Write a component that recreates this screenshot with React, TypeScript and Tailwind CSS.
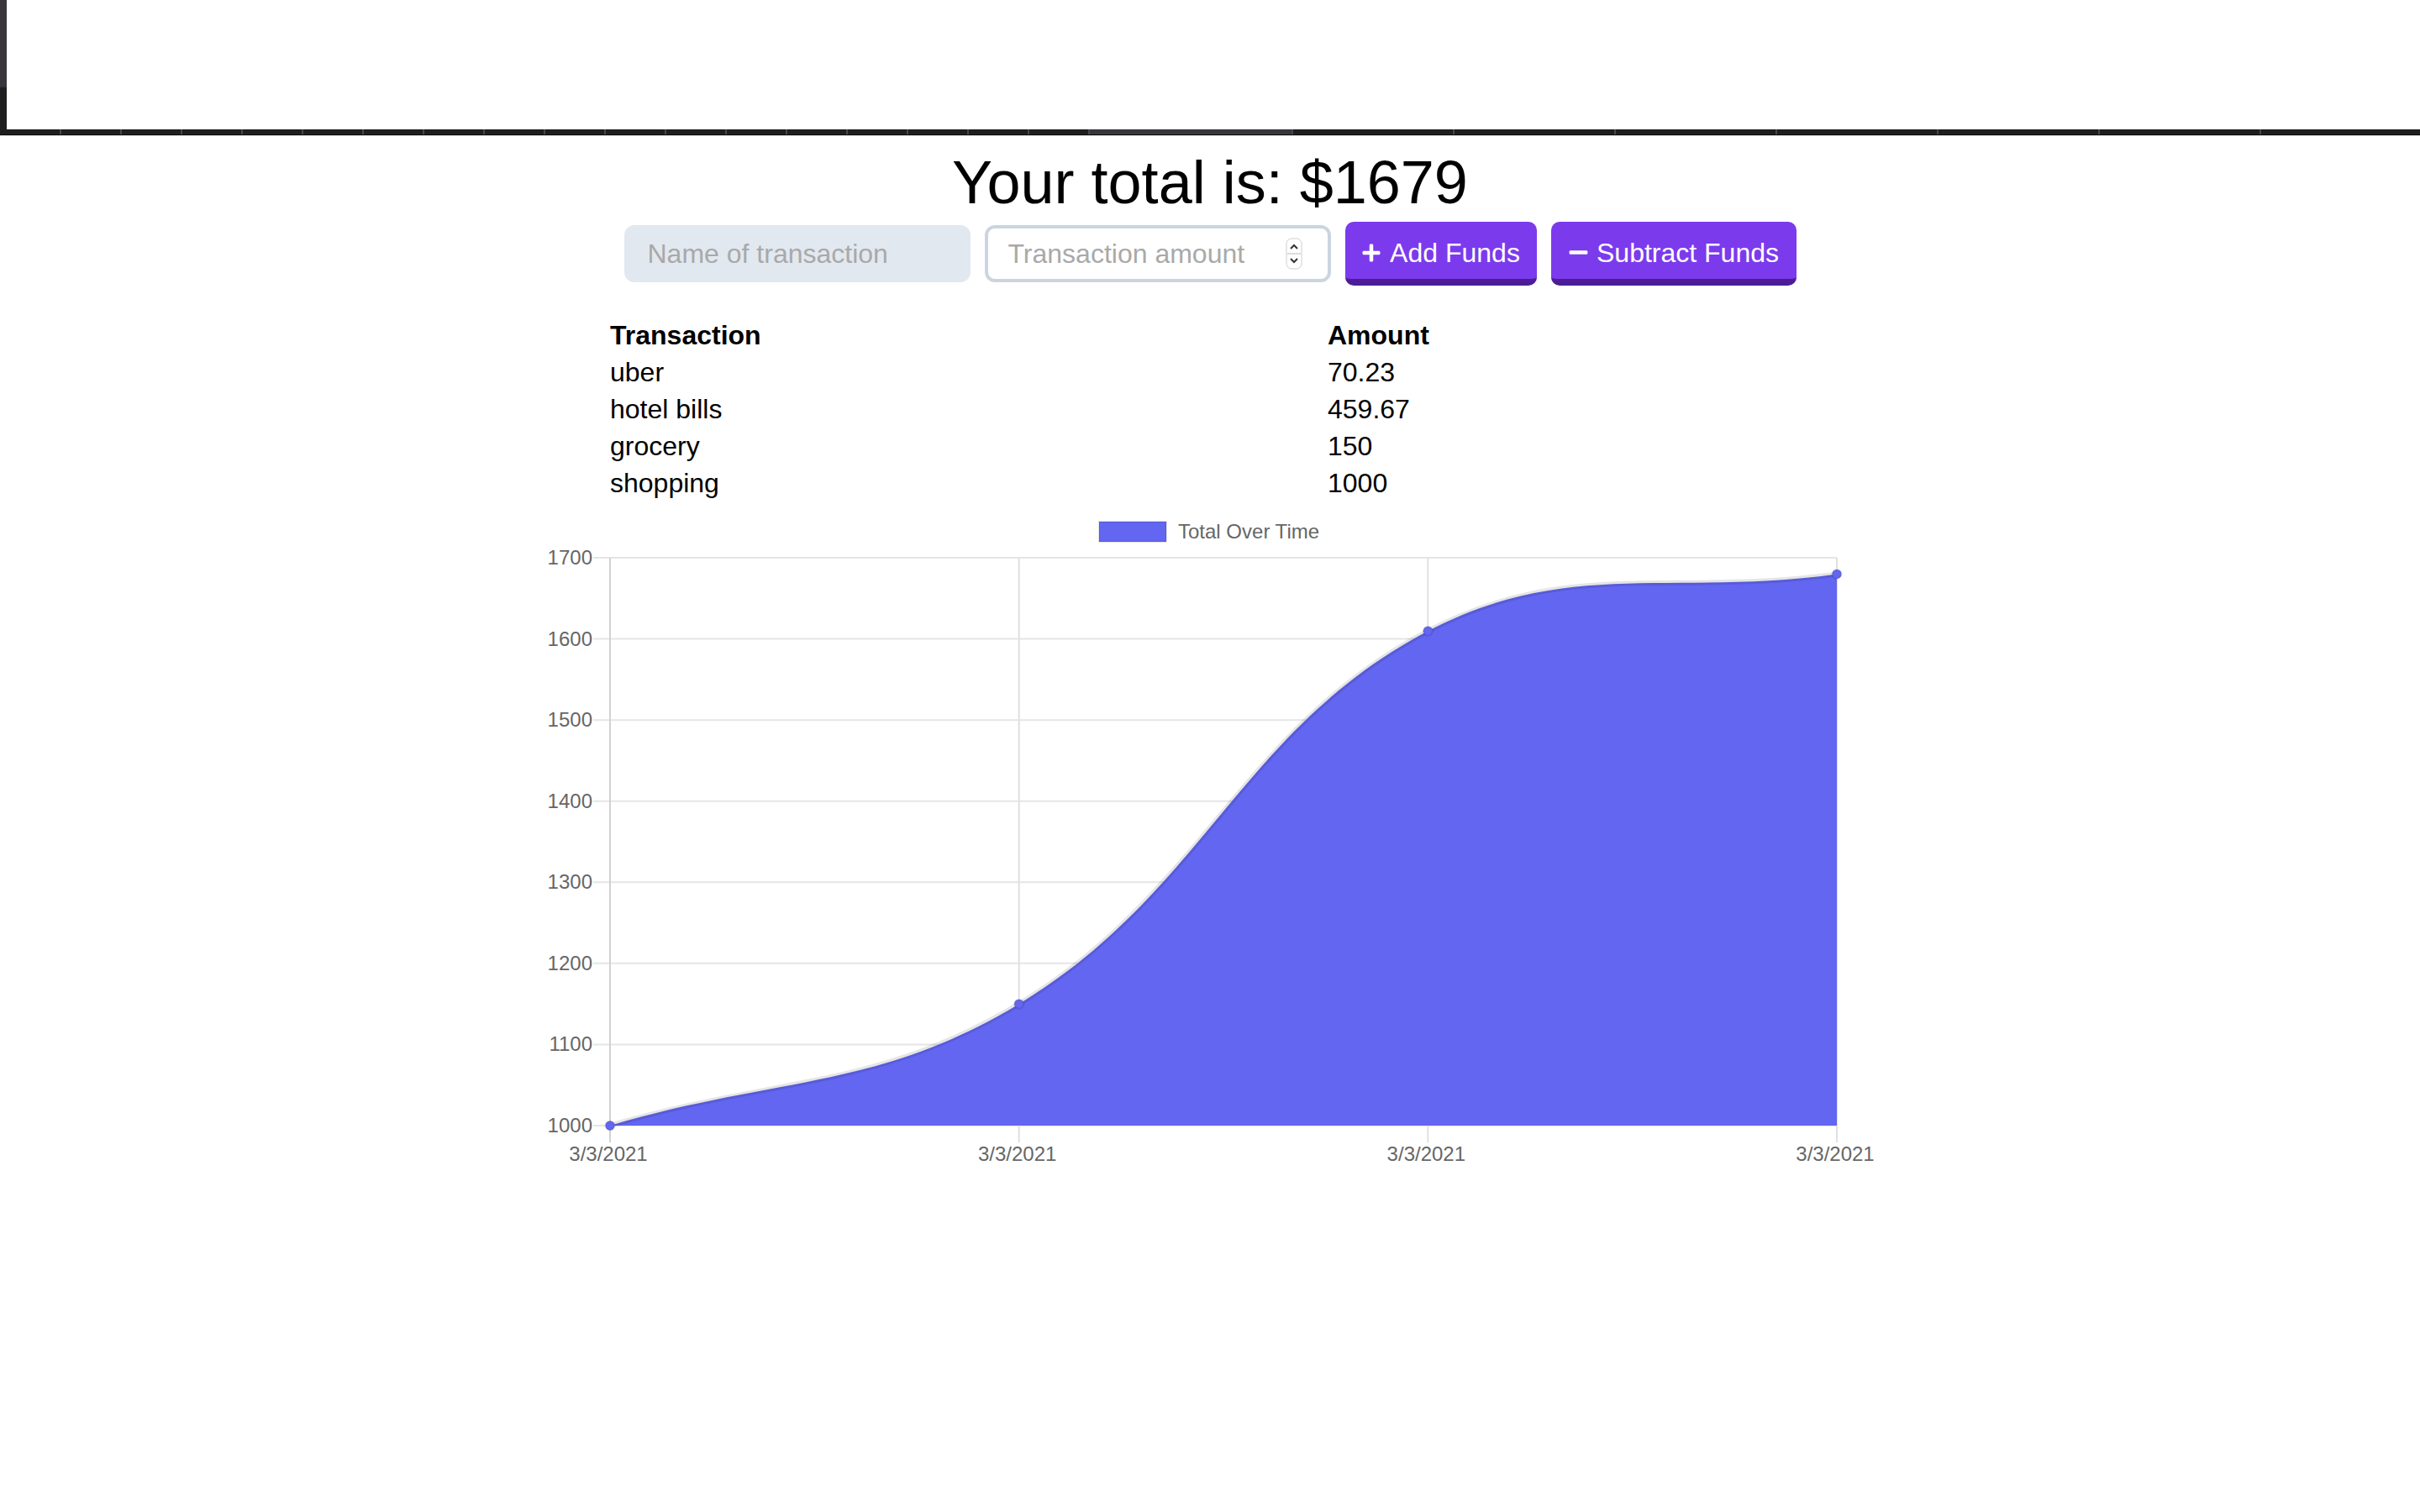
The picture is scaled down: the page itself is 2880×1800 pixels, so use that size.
import { FaPlus, FaMinus } from 'react-icons/fa';

const rows = [
  { name: 'uber', amount: '70.23' },
  { name: 'hotel bills', amount: '459.67' },
  { name: 'grocery', amount: '150' },
  { name: 'shopping', amount: '1000' },
];

// running totals, oldest first
const totals = [1000, 1150, 1609.67, 1679.9];

const W = 1600;
const H = 800;
const left = 86;
const right = 1546;
const top = 63;
const bottom = 739;
const yMin = 1000;
const yMax = 1700;

const xAt = (i: number) => left + (i * (right - left)) / (totals.length - 1);
const yAt = (v: number) => bottom - ((v - yMin) / (yMax - yMin)) * (bottom - top);
const clamp = (v: number, a: number, b: number) => Math.max(a, Math.min(b, v));

type Pt = { x: number; y: number };

const buildPath = (pts: Pt[], t: number) => {
  const ctrl = pts.map((p, i) => {
    const prev = pts[i - 1] || p;
    const next = pts[i + 1] || p;
    const d01 = Math.hypot(p.x - prev.x, p.y - prev.y);
    const d12 = Math.hypot(next.x - p.x, next.y - p.y);
    const s01 = d01 + d12 ? d01 / (d01 + d12) : 0;
    const s12 = d01 + d12 ? d12 / (d01 + d12) : 0;
    const fa = t * s01;
    const fb = t * s12;
    return {
      prev: {
        x: clamp(p.x - fa * (next.x - prev.x), left, right),
        y: clamp(p.y - fa * (next.y - prev.y), top, bottom),
      },
      next: {
        x: clamp(p.x + fb * (next.x - prev.x), left, right),
        y: clamp(p.y + fb * (next.y - prev.y), top, bottom),
      },
    };
  });
  let d = `M${pts[0].x} ${pts[0].y}`;
  for (let i = 1; i < pts.length; i++) {
    const a = ctrl[i - 1].next;
    const b = ctrl[i].prev;
    d += ` C${a.x} ${a.y} ${b.x} ${b.y} ${pts[i].x} ${pts[i].y}`;
  }
  return d;
};

const TopBar = () => (
  <div>
    <div className="flex h-[154px]">
      <div className="flex w-[8px] flex-col">
        <div className="h-[104px] bg-[#38363a]" />
        <div className="flex-1 bg-[#1e1e1e]" />
      </div>
    </div>
    <div className="flex h-[6px] overflow-hidden bg-[#1e1e1e]">
      <div className="w-[71px] shrink-0" />
      {Array.from({ length: 17 }).map((_, i) => (
        <div key={`a${i}`} className="w-[72px] shrink-0 border-l-2 border-[#474747]" />
      ))}
      <div className="w-[242px] shrink-0 border-l-2 border-[#474747] bg-[#38363a]" />
      {Array.from({ length: 7 }).map((_, i) => (
        <div key={`b${i}`} className="w-[192px] shrink-0 border-l-2 border-[#474747]" />
      ))}
    </div>
    <div className="h-px bg-[#0b0b0b]" />
    <div className="h-px bg-[#d2d2d2]" />
  </div>
);

const Spinner = () => (
  <svg width="20" height="38" viewBox="0 0 20 38" className="shrink-0">
    <rect x="1" y="1" width="18" height="36" rx="6" fill="#fff" stroke="#cfcfcf" />
    <line x1="2" y1="19" x2="18" y2="19" stroke="#dcdcdc" strokeWidth="2" />
    <path d="M6 13 L10 9 L14 13" fill="none" stroke="#333" strokeWidth="2" />
    <path d="M6 25 L10 29 L14 25" fill="none" stroke="#333" strokeWidth="2" />
  </svg>
);

const Form = () => (
  <div className="mt-[7px] flex items-center justify-center gap-[17px]">
    <input
      placeholder="Name of transaction"
      className="h-[68px] w-[412px] rounded-[12px] border-4 border-[#e2e8f0] bg-[#e2e8f0] px-[24px] text-[32px] text-black outline-none placeholder:text-[#a9a9a9]"
    />
    <div className="flex h-[68px] w-[412px] items-center rounded-[12px] border-4 border-[#cbd5e0] bg-white pl-[24px] pr-[30px]">
      <input
        placeholder="Transaction amount"
        className="min-w-0 flex-1 bg-transparent text-[32px] text-black outline-none placeholder:text-[#a9a9a9]"
      />
      <Spinner />
    </div>
    <button className="flex h-[76px] w-[228px] items-center justify-center gap-[10px] rounded-[10px] border-b-8 border-[#4c1d95] bg-[#7c3aed] pt-[5px] text-[32px] text-white">
      <FaPlus size={24} />
      <span>Add Funds</span>
    </button>
    <button className="flex h-[76px] w-[292px] items-center justify-center gap-[9px] rounded-[10px] border-b-8 border-[#4c1d95] bg-[#7c3aed] pt-[5px] text-[32px] text-white">
      <FaMinus size={25} />
      <span>Subtract Funds</span>
    </button>
  </div>
);

const Table = () => (
  <div className="mx-auto mt-[37px] grid w-[1428px] grid-cols-[854px_1fr] text-[32px] leading-[44px] text-black">
    <div className="font-bold">Transaction</div>
    <div className="font-bold">Amount</div>
    {rows.map((r) => (
      <div key={r.name} className="contents">
        <div>{r.name}</div>
        <div>{r.amount}</div>
      </div>
    ))}
  </div>
);

const Chart = () => {
  const pts = totals.map((v, i) => ({ x: xAt(i), y: yAt(v) }));
  const line = buildPath(pts, 0.4);
  const area = `${line} L${right} ${bottom} L${left} ${bottom} Z`;
  const ticks = [1000, 1100, 1200, 1300, 1400, 1500, 1600, 1700];
  const font = "'Liberation Sans', Arial, sans-serif";
  return (
    <svg width={W} height={H} viewBox={`0 0 ${W} ${H}`} className="mx-auto mt-[4px] block">
      <rect x="668" y="20" width="80" height="24" fill="#6366f1" stroke="rgba(0,0,0,0.1)" strokeWidth="2" />
      <text x="762" y="40" fontSize="24" fill="#666" fontFamily={font}>
        Total Over Time
      </text>
      {ticks.map((v) => (
        <g key={v}>
          <line x1={left - 20} y1={yAt(v)} x2={right} y2={yAt(v)} stroke="#e5e5e5" strokeWidth="2" />
          <text x={left - 21} y={yAt(v) + 8} textAnchor="end" fontSize="24" fill="#666" fontFamily={font}>
            {v}
          </text>
        </g>
      ))}
      {totals.map((_, i) => (
        <g key={i}>
          <line
            x1={xAt(i)}
            y1={top}
            x2={xAt(i)}
            y2={bottom + 20}
            stroke={i === 0 ? '#d2d2d2' : '#e0e0e0'}
            strokeWidth="2"
          />
          <text x={xAt(i) - 2} y="781" textAnchor="middle" fontSize="24" fill="#666" fontFamily={font}>
            3/3/2021
          </text>
        </g>
      ))}
      <path d={area} fill="#6366f1" />
      <path d={line} fill="none" stroke="rgba(0,0,0,0.1)" strokeWidth="6" />
      {pts.map((p, i) => (
        <circle key={i} cx={p.x} cy={p.y} r="5.5" fill="#6366f1" stroke="rgba(0,0,0,0.1)" strokeWidth="2" />
      ))}
    </svg>
  );
};

export default function App() {
  return (
    <div className="min-h-screen bg-white font-['Liberation_Sans',Arial,sans-serif]">
      <TopBar />
      <h1 className="mt-[15px] text-center text-[72px] leading-[80px] text-black">Your total is: $1679</h1>
      <Form />
      <Table />
      <Chart />
    </div>
  );
}
